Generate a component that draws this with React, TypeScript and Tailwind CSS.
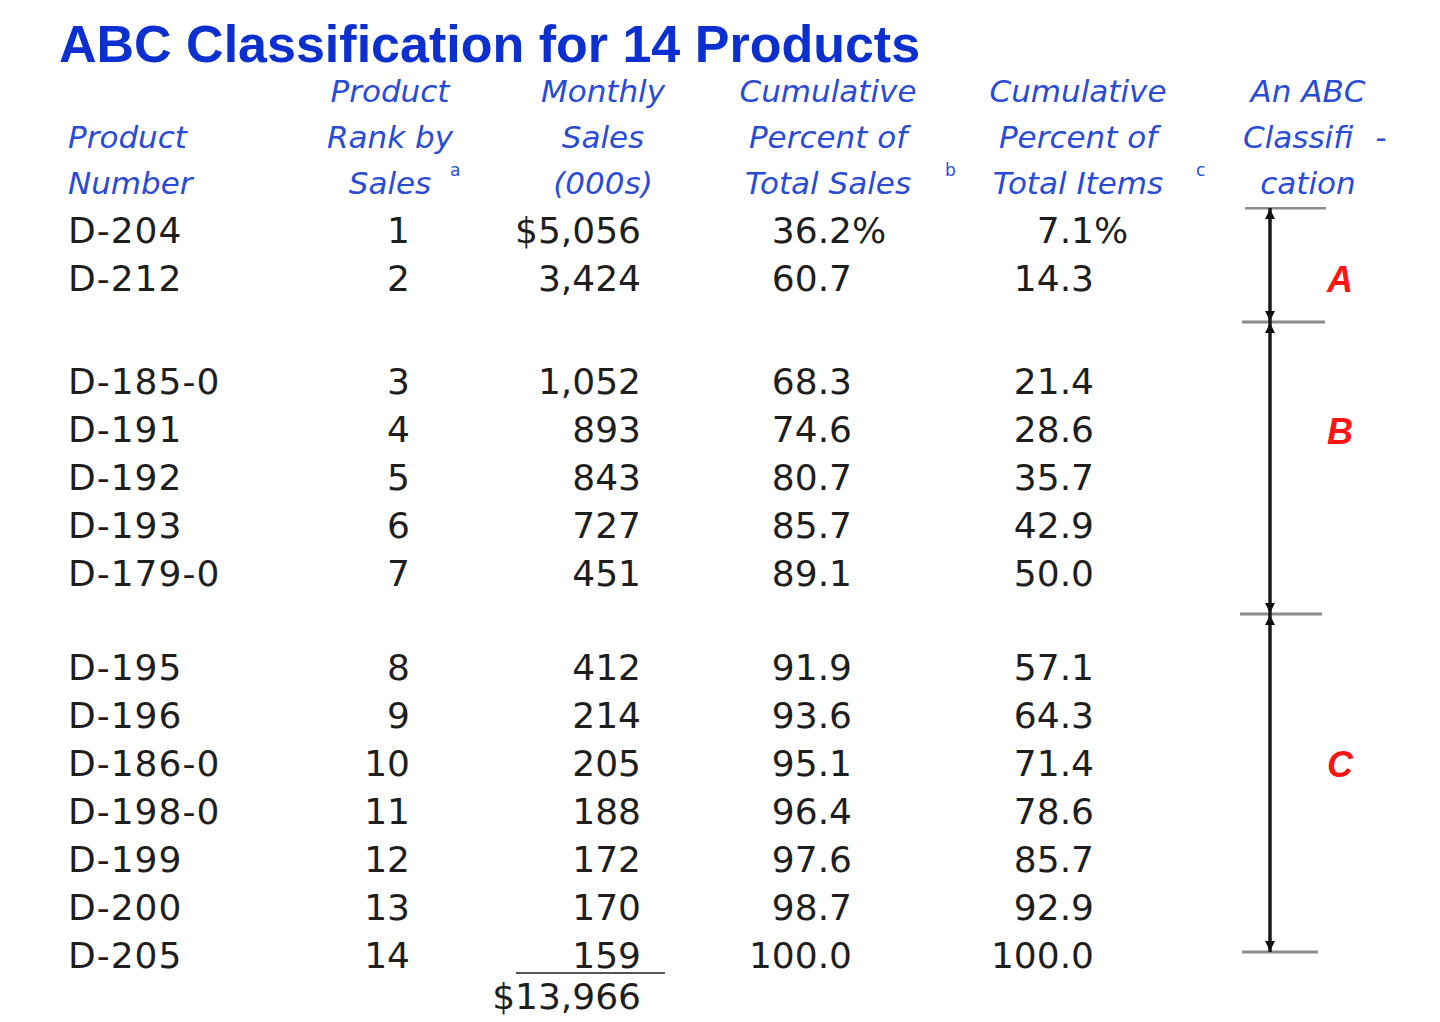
import React from 'react';

type Row = {
  id: string;
  rank: string;
  sales: string;
  cumSales: string;
  cumItems: string;
  pct?: boolean;
};

const groups: Row[][] = [
  [
    { id: 'D-204', rank: '1', sales: '$5,056', cumSales: '36.2', cumItems: '7.1', pct: true },
    { id: 'D-212', rank: '2', sales: '3,424', cumSales: '60.7', cumItems: '14.3' },
  ],
  [
    { id: 'D-185-0', rank: '3', sales: '1,052', cumSales: '68.3', cumItems: '21.4' },
    { id: 'D-191', rank: '4', sales: '893', cumSales: '74.6', cumItems: '28.6' },
    { id: 'D-192', rank: '5', sales: '843', cumSales: '80.7', cumItems: '35.7' },
    { id: 'D-193', rank: '6', sales: '727', cumSales: '85.7', cumItems: '42.9' },
    { id: 'D-179-0', rank: '7', sales: '451', cumSales: '89.1', cumItems: '50.0' },
  ],
  [
    { id: 'D-195', rank: '8', sales: '412', cumSales: '91.9', cumItems: '57.1' },
    { id: 'D-196', rank: '9', sales: '214', cumSales: '93.6', cumItems: '64.3' },
    { id: 'D-186-0', rank: '10', sales: '205', cumSales: '95.1', cumItems: '71.4' },
    { id: 'D-198-0', rank: '11', sales: '188', cumSales: '96.4', cumItems: '78.6' },
    { id: 'D-199', rank: '12', sales: '172', cumSales: '97.6', cumItems: '85.7' },
    { id: 'D-200', rank: '13', sales: '170', cumSales: '98.7', cumItems: '92.9' },
    { id: 'D-205', rank: '14', sales: '159', cumSales: '100.0', cumItems: '100.0' },
  ],
];

// spacing under each group (last one has none)
const groupGaps = ['h-[55px]', 'h-[46px]', ''];

function HeaderCol({ lines, className }: { lines: React.ReactNode[]; className: string }) {
  return (
    <div className={className}>
      {lines.map((line, i) => (
        <div key={i} className="h-[46px] leading-[46px] whitespace-pre">
          {line}
        </div>
      ))}
    </div>
  );
}

function DataRow({ row }: { row: Row }) {
  return (
    <div className="flex h-[48px] items-center leading-[48px]">
      <div className="w-[250px] tracking-[1px]">{row.id}</div>
      <div className="w-[92px] text-right">{row.rank}</div>
      <div className="w-[231px] text-right">{row.sales}</div>
      <div className="w-[211px] text-right">{row.cumSales}</div>
      <div className="w-[38px]">{row.pct ? '%' : ''}</div>
      <div className="w-[204px] text-right">{row.cumItems}</div>
      <div className="w-[38px]">{row.pct ? '%' : ''}</div>
    </div>
  );
}

function Bracket() {
  const ticks = [
    { y: 1, x1: 15, x2: 98 },
    { y: 115, x1: 12, x2: 95 },
    { y: 407, x1: 10, x2: 92 },
    { y: 745, x1: 12, x2: 88 },
  ];
  const up = (t: number) => `40,${t + 1} 35,${t + 11} 45,${t + 11}`;
  const down = (t: number) => `40,${t - 1} 35,${t - 11} 45,${t - 11}`;
  return (
    <svg width="96" height="750" viewBox="0 0 96 750" className="block">
      {ticks.map((t, i) => (
        <line key={i} x1={t.x1} x2={t.x2} y1={t.y} y2={t.y} stroke="#8c8c8c" strokeWidth="3" />
      ))}
      <line x1="40" x2="40" y1="1" y2="745" stroke="#1a1a1a" strokeWidth="3.5" />
      <polygon points={up(1)} fill="#111" />
      <polygon points={down(115)} fill="#111" />
      <polygon points={up(115)} fill="#111" />
      <polygon points={down(407)} fill="#111" />
      <polygon points={up(407)} fill="#111" />
      <polygon points={down(745)} fill="#111" />
    </svg>
  );
}

export default function App() {
  return (
    <div className="w-[1440px] h-[1022px] overflow-hidden bg-white">
      {/* Title */}
      <h1 className="pl-[59px] pt-[24px] text-[52px] leading-[40px] font-bold text-[#0b30cf] font-['Liberation_Sans',Arial,sans-serif]">
        ABC Classification for 14 Products
      </h1>

      {/* Column headers */}
      <div className="relative flex pl-[68px] pt-[4px] text-[31px] italic text-[#2a4bd6] font-['DejaVu_Sans',sans-serif]">
        <HeaderCol className="w-[160px]" lines={['', 'Product', 'Number']} />
        <HeaderCol className="ml-[90px] w-[144px] text-center" lines={['Product', 'Rank by', 'Sales']} />
        <HeaderCol className="ml-[61px] w-[160px] text-center" lines={['Monthly', 'Sales', '(000s)']} />
        <HeaderCol className="ml-[50px] w-[190px] text-center" lines={['Cumulative', 'Percent of', 'Total Sales']} />
        <HeaderCol className="ml-[60px] w-[190px] text-center" lines={['Cumulative', 'Percent of', 'Total Items']} />
        <HeaderCol
          className="ml-[55px] w-[160px] text-center"
          lines={[
            'An ABC',
            <span key="c" className="block pl-[15px] text-left">
              Classifi<span className="ml-[22px]">-</span>
            </span>,
            'cation',
          ]}
        />
        <span className="absolute left-[450px] top-[94px] text-[17px] not-italic">a</span>
        <span className="absolute left-[945px] top-[94px] text-[17px] not-italic">b</span>
        <span className="absolute left-[1196px] top-[94px] text-[17px] not-italic">c</span>
      </div>

      {/* Body */}
      <div className="flex pl-[68px] pt-[1px]">
        <div className="text-[36px] text-[#1e1e1e] font-['DejaVu_Sans',sans-serif]">
          {groups.map((group, gi) => (
            <div key={gi}>
              {group.map((row) => (
                <DataRow key={row.id} row={row} />
              ))}
              {groupGaps[gi] && <div className={groupGaps[gi]} />}
            </div>
          ))}
          <div className="flex h-[48px] -mt-[8px]">
            <div className="w-[448px]" />
            <div className="flex w-[149px] justify-end whitespace-nowrap border-t-2 border-[#555] pr-[24px] leading-[46px]">
              <span>$13,966</span>
            </div>
          </div>
        </div>

        <div className="ml-[98px] flex">
          <Bracket />
          <div className="flex w-[28px] flex-col text-center text-[36px] leading-[40px] font-bold italic text-[#ff1414] font-['Liberation_Sans',Arial,sans-serif]">
            <div className="mt-[53px]">A</div>
            <div className="mt-[112px]">B</div>
            <div className="mt-[293px]">C</div>
          </div>
        </div>
      </div>
    </div>
  );
}
